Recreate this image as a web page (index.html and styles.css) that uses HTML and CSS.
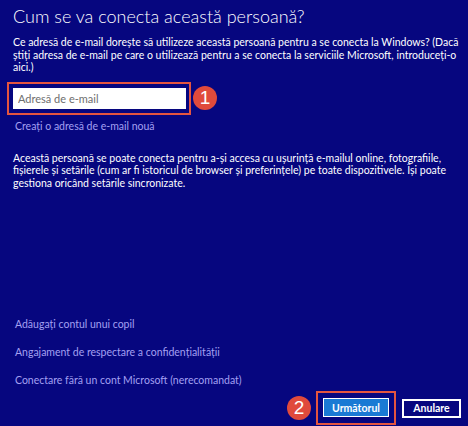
FILE: index.html
```html
<!DOCTYPE html>
<html lang="ro">
<head>
    <meta charset="UTF-8">
    <title>Cum se va conecta această persoană?</title>
    <link rel="stylesheet" href="styles.css">
</head>
<body>
    <div class="page">
        <h1>Cum se va conecta această persoană?</h1>
        <p class="intro">Ce adresă de e-mail dorește să utilizeze această persoană pentru a se conecta la Windows? (Dacă știți adresa de e-mail pe care o utilizează pentru a se conecta la serviciile Microsoft, introduceți-o aici.)</p>

        <div class="field-row">
            <div class="mark-box">
                <input type="text" class="email-input" placeholder="Adresă de e-mail">
            </div>
            <span class="step">1</span>
        </div>
        <a href="#" class="link new-email">Creați o adresă de e-mail nouă</a>

        <p class="info">Această persoană se poate conecta pentru a-și accesa cu ușurință e-mailul online, fotografiile, fișierele și setările (cum ar fi istoricul de browser și preferințele) pe toate dispozitivele. Își poate gestiona oricând setările sincronizate.</p>

        <!-- links at the bottom -->
        <div class="bottom-links">
            <a href="#" class="link">Adăugați contul unui copil</a>
            <a href="#" class="link">Angajament de respectare a confidențialității</a>
            <a href="#" class="link">Conectare fără un cont Microsoft (nerecomandat)</a>
        </div>

        <div class="buttons">
            <span class="step">2</span>
            <div class="mark-box btn-mark">
                <button class="btn btn-primary">Următorul</button>
            </div>
            <button class="btn btn-cancel">Anulare</button>
        </div>
    </div>
</body>
</html>
```

FILE: styles.css
```css
body {
    margin: 0;
    background-color: #06067f;
    color: #fff;
    font-family: Lato, "Open Sans", sans-serif;
}
.page {
    height: 426px;
    box-sizing: border-box;
    padding: 0 7px 0 13px;
    display: flex;
    flex-direction: column;
}
h1 {
    font-size: 18px;
    font-weight: 300;
    margin: 4px 0 0;
    line-height: 24px;
}
.intro, .info {
    font-size: 10.5px;
    line-height: 12.5px;
    margin: 8px 0 0;
}
.field-row {
    display: flex;
    align-items: center;
    margin: 8px 0 0 -6px;
}
.mark-box {
    border: 2px solid #e4553f;
    padding: 4px 3px 4px 4px;
}
.email-input {
    display: block;
    width: 173px;
    height: 21px;
    box-sizing: border-box;
    border: none;
    padding: 0 5px;
    font-family: inherit;
    font-size: 11px;
    outline: none;
}
.email-input::placeholder { color: #6e6e6e; }
.step {
    width: 24px;
    height: 24px;
    border-radius: 50%;
    background: #e04a3c;
    color: #fff;
    font-family: "Liberation Sans", Arial, sans-serif;
    font-size: 19px;
    line-height: 24px;
    text-align: center;
    margin-left: 2px;
}
.link {
    color: #a4a0f2;
    font-size: 10.5px;
    text-decoration: none;
}
.new-email { margin: 5px 0 0 2px; }
.info { margin-top: 20px; }
.bottom-links {
    margin-top: auto;
    display: flex;
    flex-direction: column;
    gap: 14px;
    padding-left: 2px;
}
.bottom-links .link { line-height: 14px; }
.buttons {
    display: flex;
    justify-content: flex-end;
    align-items: center;
    gap: 6px;
    margin-top: 4px;
    margin-bottom: 1px;
}
.buttons .step { margin-right: -1px; }
.btn-mark { padding: 5px 5px 6px; }
.btn {
    height: 19px;
    border: 2px solid #fff;
    background: #06067f;
    color: #fff;
    font-family: inherit;
    font-weight: 700;
    font-size: 10.5px;
    padding: 0;
}
.btn-primary {
    background: #1a7ad4;
    border-width: 1px;
    width: 66px;
    display: block;
}
.btn-cancel { width: 59px; }
```
